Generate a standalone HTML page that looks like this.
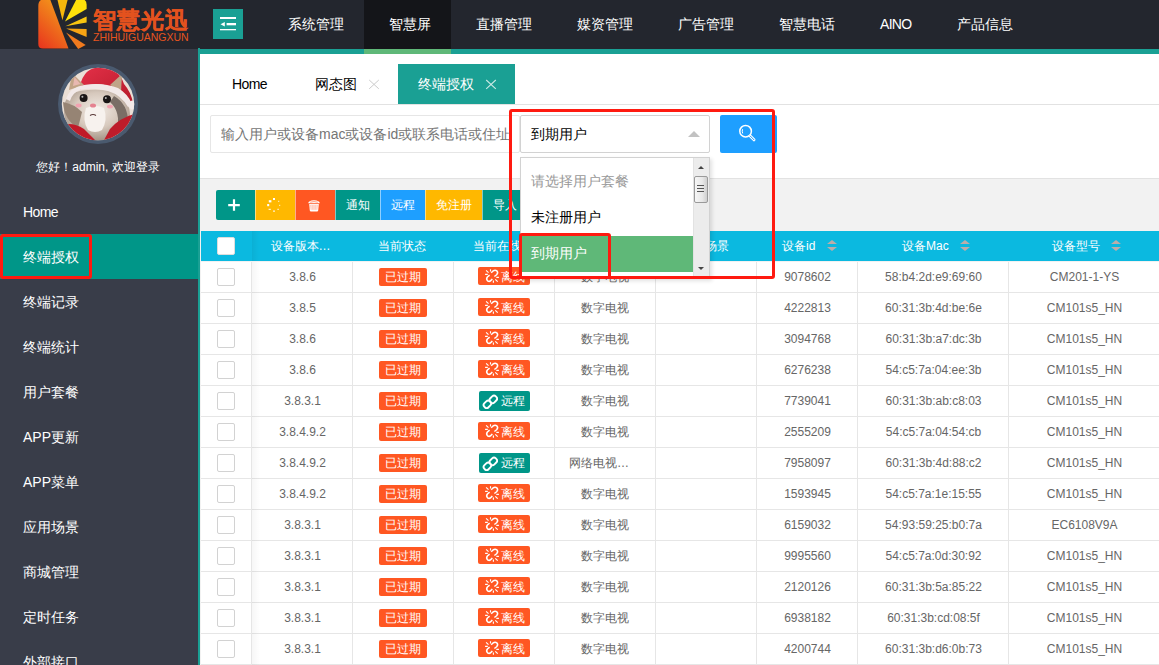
<!DOCTYPE html>
<html><head><meta charset="utf-8">
<style>
*{margin:0;padding:0;box-sizing:border-box}
html,body{width:1159px;height:665px;overflow:hidden;background:#fff}
body{position:relative;font-family:"Liberation Sans",sans-serif;font-size:14px;color:#333}
.a{position:absolute}
.hdr{left:0;top:0;width:1159px;height:49px;background:#23262E}
.nav{top:0;height:48px;line-height:48px;color:#fff;font-size:14px;white-space:nowrap}
.side{left:0;top:49px;width:198px;height:616px;background:#393D49}
.menu{left:23px;color:#fff;font-size:14px;line-height:20px;white-space:nowrap}
.tab{top:64px;height:40px;line-height:40px;font-size:14px;color:#000;white-space:nowrap}
.x{color:#aaa;font-size:16px}
.btn{top:190px;height:30px;line-height:30px;color:#fff;font-size:12px;text-align:center}
.th{top:231px;height:30px;line-height:30px;color:#fff;font-size:12px;text-align:center;white-space:nowrap}
.row{left:201px;width:958px;height:31px;border-bottom:1px solid #e6e6e6;background:#fff}
.cell{position:absolute;top:0;height:30px;line-height:30px;font-size:12px;color:#666;text-align:center;white-space:nowrap}
.vl{position:absolute;top:262px;width:1px;height:403px;background:#e6e6e6}
.cb{position:absolute;width:18px;height:18px;border:1px solid #d2d2d2;border-radius:2px;background:#fff}
.bd{position:absolute;height:18px;line-height:18px;color:#fff;font-size:12px;border-radius:2px;text-align:center}.bd .ic{position:absolute}.bt{position:absolute;top:0;line-height:18px}
.red{position:absolute;border:3px solid #FF1A10;border-radius:3px}
.exp{background:#FF5722}.off{background:#FF5722}.on{background:#009688}
.srt{display:inline-block;width:10px;height:12px;vertical-align:middle;position:relative;margin-left:6px;top:-1px}.srt:before{content:"";position:absolute;left:0;top:1px;border-left:4.6px solid transparent;border-right:4.6px solid transparent;border-bottom:4.5px solid #BDB0AB}.srt:after{content:"";position:absolute;left:0;top:7px;border-left:4.6px solid transparent;border-right:4.6px solid transparent;border-top:4.5px solid #BDB0AB}
.srt2{width:10px;height:12px}.srt2:before{content:"";position:absolute;left:0;top:0;border-left:5.1px solid transparent;border-right:5.1px solid transparent;border-bottom:4.8px solid #BBADA9}.srt2:after{content:"";position:absolute;left:0;top:6.8px;border-left:5.1px solid transparent;border-right:5.1px solid transparent;border-top:4.8px solid #BBADA9}
</style></head><body>

<!-- header -->
<div class="a hdr"></div>
<div class="a" style="left:364px;top:0;width:87px;height:49px;background:#141519"></div>
<div class="a" style="left:213px;top:9px;width:30px;height:30px;background:#1AA094"></div>
<div class="a nav" style="left:288px">系统管理</div>
<div class="a nav" style="left:389px">智慧屏</div>
<div class="a nav" style="left:476px">直播管理</div>
<div class="a nav" style="left:577px">媒资管理</div>
<div class="a nav" style="left:678px">广告管理</div>
<div class="a nav" style="left:779px">智慧电话</div>
<div class="a nav" style="left:880px;letter-spacing:-0.7px">AINO</div>
<div class="a nav" style="left:957px">产品信息</div>

<!-- teal frame -->
<div class="a" style="left:198px;top:49px;width:961px;height:5px;background:#1AA094"></div>
<div class="a" style="left:364px;top:49px;width:87px;height:5px;background:#5FB878"></div>
<div class="a" style="left:198px;top:48px;width:2px;height:617px;background:#1AA094"></div>

<!-- sidebar -->
<div class="a side"></div>
<div class="a" style="left:23px;top:159px;width:150px;text-align:center;color:#fff;font-size:12px">您好！admin, 欢迎登录</div>
<div class="a" style="left:0;top:234px;width:198px;height:45px;background:#009688"></div>
<div class="a menu" style="top:202px;letter-spacing:-0.6px">Home</div>
<div class="a menu" style="top:247px">终端授权</div>
<div class="a menu" style="top:292px">终端记录</div>
<div class="a menu" style="top:337px">终端统计</div>
<div class="a menu" style="top:382px">用户套餐</div>
<div class="a menu" style="top:427px">APP更新</div>
<div class="a menu" style="top:472px">APP菜单</div>
<div class="a menu" style="top:517px">应用场景</div>
<div class="a menu" style="top:562px">商城管理</div>
<div class="a menu" style="top:607px">定时任务</div>
<div class="a menu" style="top:652px">外部接口</div>

<!-- content -->
<div class="a" style="left:200px;top:104px;width:959px;height:1px;background:#e2e2e2"></div>
<div class="a tab" style="left:232px;letter-spacing:-0.6px">Home</div>
<div class="a tab" style="left:315px">网态图</div>
<div class="a" style="left:398px;top:64px;width:117px;height:40px;background:#1AA094"></div>
<div class="a tab" style="left:418px;color:#fff">终端授权</div>

<div class="a" style="left:210px;top:115px;width:310px;height:38px;border:1px solid #e6e6e6;border-radius:2px"></div>
<div class="a" style="left:221px;top:115px;height:38px;line-height:38px;font-size:14px;color:#757575;white-space:nowrap;width:288px;overflow:hidden">输入用户或设备mac或设备id或联系电话或住址</div>

<div class="a" style="left:200px;top:178px;width:959px;height:487px;background:#F2F2F2;border-top:1px solid #e2e2e2"></div>

<!-- buttons -->
<div class="a btn" style="left:216px;width:39px;background:#009688;border-radius:2px 0 0 2px"></div>
<div class="a btn" style="left:255px;width:40px;background:#FFB800;border-left:1px solid #FFDC80"></div>
<div class="a btn" style="left:295px;width:40px;background:#FF5722;border-left:1px solid #FFAB91"></div>
<div class="a btn" style="left:335px;width:45px;background:#009688;border-left:1px solid #80CBC4">通知</div>
<div class="a btn" style="left:380px;width:45px;background:#1E9FFF;border-left:1px solid #8FCFFF">远程</div>
<div class="a btn" style="left:425px;width:57px;background:#FFB800;border-left:1px solid #FFDC80">免注册</div>
<div class="a btn" style="left:482px;width:45px;background:#009688;border-left:1px solid #80CBC4">导入</div>

<!-- table header -->
<div class="a" style="left:201px;top:231px;width:958px;height:30px;background:#0BB9E0"></div>
<div class="cb" style="left:217px;top:237px;border-color:#ddd"></div>



<!-- logo -->
<svg class="a" style="left:30px;top:0" width="65" height="50" viewBox="30 0 65 50">
<defs>
<linearGradient id="lg1" x1="0" y1="1" x2="0.6" y2="0"><stop offset="0" stop-color="#E8321E"/><stop offset="1" stop-color="#F39A1A"/></linearGradient>
<linearGradient id="lg2" x1="0" y1="0" x2="0" y2="1"><stop offset="0" stop-color="#FFE40A"/><stop offset="1" stop-color="#F27A1E"/></linearGradient>
</defs>
<path d="M45,-1 L50,-1 L68.5,48.5 L42.8,48.5 Q38.3,48.5 38.3,44 L38.3,6 Q38.3,-1 45,-1 Z" fill="url(#lg1)"/>
<polygon points="62.4,20.3 57.5,0 67.6,0" fill="#F6B80C"/>
<path d="M65,21.4 L76.6,-1 L82.5,-1 Q86.6,0 86.6,4.5 L86.6,9 Z" fill="#FFE10A"/>
<polygon points="65.4,26.3 86.6,16.5 86.6,22.6" fill="#F9C510"/>
<polygon points="66.1,28.6 86.6,29 86.6,36.9" fill="#F6A414"/>
<polygon points="66.1,32.4 85.7,45.1 78.2,48.9" fill="#F07A1E"/>
</svg>
<div class="a" style="left:92.5px;top:6px;font-size:23px;line-height:28px;font-weight:bold;color:#E4521E;letter-spacing:1px;white-space:nowrap;-webkit-text-stroke:0.25px #E4521E">智慧光迅</div>
<div class="a" style="left:93px;top:31px;font-size:10.5px;line-height:12px;color:#E8541E;white-space:nowrap;letter-spacing:0px">ZHIHUIGUANGXUN</div>

<!-- toggle icon -->
<svg class="a" style="left:213px;top:9px" width="30" height="30" viewBox="0 0 30 30">
<rect x="7" y="8" width="16" height="2" fill="#fff"/>
<polygon points="7.5,15.2 11.8,13 11.8,17.4" fill="#fff"/>
<rect x="13.6" y="14" width="9.4" height="2.3" fill="#fff"/>
<rect x="7" y="20" width="16" height="1.3" fill="#fff"/>
</svg>

<!-- avatar -->
<svg class="a" style="left:58px;top:64px" width="80" height="80" viewBox="58 64 80 80">
<defs><clipPath id="av"><circle cx="98" cy="104" r="36.2"/></clipPath>
<radialGradient id="fg" cx="0.5" cy="0.4" r="0.62"><stop offset="0" stop-color="#F3ECE6"/><stop offset="0.55" stop-color="#D6C8BC"/><stop offset="1" stop-color="#9E8E80"/></radialGradient>
<linearGradient id="hg" x1="0" y1="0" x2="1" y2="1"><stop offset="0" stop-color="#E43048"/><stop offset="1" stop-color="#B51A2A"/></linearGradient>
</defs>
<circle cx="98" cy="104" r="40" fill="#4A5A6F"/>
<g clip-path="url(#av)">
<rect x="58" y="64" width="80" height="80" fill="#EADFD6"/>
<path d="M80,86 Q84,67 101,67 Q119,68 124,84 Q131,92 133,103 L120,96 Q110,84 98,84 Q86,84 80,90 Z" fill="url(#hg)"/>
<path d="M69,90 L72,73 L84,85 Z" fill="#C2A486"/>
<path d="M73,86 L74.5,77 L80.5,84 Z" fill="#E8B8B0"/>
<path d="M121,92 L122,74 L110,85 Z" fill="#BFA488"/>
<path d="M64,112 Q63,94 80,91 Q98,88 116,92 Q130,100 130,116 Q129,132 112,139 Q96,143 82,139 Q65,131 64,112 Z" fill="url(#fg)"/>
<path d="M63,102 Q64,120 78,128 L82,112 Q74,104 63,102 Z" fill="#968474"/>
<path d="M114,96 Q128,104 128,122 L117,130 Q121,112 110,102 Z" fill="#7A6E66"/>
<path d="M86,108 Q95,104 104,108 Q108,120 102,130 Q95,134 88,130 Q82,120 86,108 Z" fill="#F7F2EE"/>
<path d="M66,99 Q70,87 84,85 Q102,82 118,88 Q128,94 132,104 L128,107 Q121,95 108,91 Q92,87 80,90 Q72,93 70,101 Z" fill="#F2E9E8"/>
<circle cx="133" cy="105" r="4.5" fill="#F2E9E8"/>
<circle cx="83.6" cy="98" r="4" fill="#191515"/>
<circle cx="107" cy="99.3" r="4" fill="#191515"/>
<circle cx="82.4" cy="96.8" r="1" fill="#fff" opacity=".7"/>
<circle cx="105.8" cy="98.1" r="1" fill="#fff" opacity=".7"/>
<ellipse cx="93" cy="105.5" rx="3" ry="2.1" fill="#E58290"/>
<ellipse cx="78.6" cy="105.5" rx="3" ry="1.9" fill="#F2A2B0"/>
<ellipse cx="110" cy="106.6" rx="3" ry="1.9" fill="#F2A2B0"/>
<path d="M90,115.5 Q93,113.6 96,115.5" stroke="#5A3A3A" stroke-width="1.1" fill="none"/>
<path d="M58,127 Q70,120 84,129 L97,142 L58,142 Z" fill="#C01A28"/>
<path d="M103,142 L110,129 Q120,117 138,113 L138,142 Z" fill="#BE1C2A"/>
</g>
</svg>

<!-- tab close marks -->
<svg class="a" style="left:368px;top:79px" width="12" height="11" viewBox="0 0 12 11"><path d="M1.2,1 L10.8,9.8 M10.8,1 L1.2,9.8" stroke="#cccccc" stroke-width="1"/></svg>
<svg class="a" style="left:485px;top:79px" width="12" height="11" viewBox="0 0 12 11"><path d="M1.2,1 L10.8,9.8 M10.8,1 L1.2,9.8" stroke="#c9e8e4" stroke-width="1.1"/></svg>

<!-- button icons -->
<svg class="a" style="left:226px;top:197px" width="16" height="16" viewBox="0 0 16 16"><path d="M8,2.2 V13.8 M2.2,8.2 H13.8" stroke="#fff" stroke-width="2.2"/></svg>
<svg class="a" style="left:266px;top:197px" width="16" height="16" viewBox="0 0 16 16" fill="#fff">
<rect x="7" y="1" width="2" height="2"/><rect x="2.8" y="3.2" width="2.6" height="2.2"/><rect x="1.2" y="7" width="2" height="2.2"/>
<rect x="2.6" y="11.8" width="2.2" height="1"/><rect x="7" y="13.6" width="2" height="1"/><rect x="11.4" y="11.8" width="1.4" height="1"/>
<rect x="13.2" y="7.8" width="1" height="1"/><rect x="12.2" y="3.8" width="1" height="1"/>
</svg>
<svg class="a" style="left:306px;top:197px" width="16" height="16" viewBox="0 0 16 16">
<path d="M2.2,6.2 Q2.4,3.6 8,3.2 Q13.6,3.6 13.8,6.2 Z" fill="#fff"/>
<path d="M4.2,5.2 Q8,4 11.8,5.2" stroke="#FF5722" stroke-width="0.6" fill="none"/>
<path d="M3.2,7 L3.8,13.4 Q3.9,14.4 5,14.4 H11 Q12.1,14.4 12.2,13.4 L12.8,7 Z" fill="#fff"/>
<path d="M4.3,7.8 L4.7,12.8 H11.3 L11.7,7.8 Z" fill="#FFB9A4"/>
<path d="M5.9,7.8 V12.8 M8,7.8 V12.8 M10.1,7.8 V12.8" stroke="#fff" stroke-width="0.8"/>
</svg>



<!-- table header texts -->
<div class="a th" style="left:250px;width:101px">设备版本…</div>
<div class="a th" style="left:351.5px;width:101px">当前状态</div>
<div class="a th" style="left:452.5px;width:101px">当前在线…</div>
<div class="a th" style="left:553.5px;width:101px">终端类型</div>
<div class="a th" style="left:654.5px;width:101px">应用场景</div>
<div class="a th" style="left:782px">设备id</div>
<i class="a srt2" style="left:827px;top:240px"></i>
<div class="a th" style="left:902px">设备Mac</div>
<i class="a srt2" style="left:959.5px;top:240px"></i>
<div class="a th" style="left:1052px">设备型号</div>
<i class="a srt2" style="left:1111px;top:240px"></i>

<!-- rows -->
<div class="a row" style="top:262px">
<div class="cb" style="left:16px;top:6px"></div>
<div class="cell" style="left:51px;width:101px">3.8.6</div>
<div class="bd exp" style="left:178px;top:6px;width:48px">已过期</div>
<div class="bd off" style="left:277px;top:5px;width:52px"><svg class="ic" style="left:4px;top:0" width="20" height="18" viewBox="0 0 20 18" fill="none" stroke="#fff" stroke-width="1.15"><path d="M4.1,3.4 L6.5,5.7 M8.5,2.2 V4.6 M3.1,7.4 H5.8 M14.3,10.4 H16.9 M11.4,13.4 V15.8 M13.3,12.3 L15.7,14.7"/><path d="M7.6,8.1 L5.4,10 Q3.8,12.2 5.6,13.8 Q7.6,15.3 9.4,13 L10.3,11.9" stroke-width="1.5"/><path d="M9.2,5.7 L10.8,4.2 Q13,2.4 14.8,3.8 Q16.6,5.6 14.6,7.8 L12.4,9.5" stroke-width="1.5"/></svg><span class="bt" style="left:22.5px;top:1px">离线</span></div>
<div class="cell" style="left:353px;width:101px">数字电视</div>
<div class="cell" style="left:556px;width:101px">9078602</div>
<div class="cell" style="left:657px;width:151px">58:b4:2d:e9:69:60</div>
<div class="cell" style="left:808px;width:151px">CM201-1-YS</div>
</div>
<div class="a row" style="top:293px">
<div class="cb" style="left:16px;top:6px"></div>
<div class="cell" style="left:51px;width:101px">3.8.5</div>
<div class="bd exp" style="left:178px;top:6px;width:48px">已过期</div>
<div class="bd off" style="left:277px;top:5px;width:52px"><svg class="ic" style="left:4px;top:0" width="20" height="18" viewBox="0 0 20 18" fill="none" stroke="#fff" stroke-width="1.15"><path d="M4.1,3.4 L6.5,5.7 M8.5,2.2 V4.6 M3.1,7.4 H5.8 M14.3,10.4 H16.9 M11.4,13.4 V15.8 M13.3,12.3 L15.7,14.7"/><path d="M7.6,8.1 L5.4,10 Q3.8,12.2 5.6,13.8 Q7.6,15.3 9.4,13 L10.3,11.9" stroke-width="1.5"/><path d="M9.2,5.7 L10.8,4.2 Q13,2.4 14.8,3.8 Q16.6,5.6 14.6,7.8 L12.4,9.5" stroke-width="1.5"/></svg><span class="bt" style="left:22.5px;top:1px">离线</span></div>
<div class="cell" style="left:353px;width:101px">数字电视</div>
<div class="cell" style="left:556px;width:101px">4222813</div>
<div class="cell" style="left:657px;width:151px">60:31:3b:4d:be:6e</div>
<div class="cell" style="left:808px;width:151px">CM101s5_HN</div>
</div>
<div class="a row" style="top:324px">
<div class="cb" style="left:16px;top:6px"></div>
<div class="cell" style="left:51px;width:101px">3.8.6</div>
<div class="bd exp" style="left:178px;top:6px;width:48px">已过期</div>
<div class="bd off" style="left:277px;top:5px;width:52px"><svg class="ic" style="left:4px;top:0" width="20" height="18" viewBox="0 0 20 18" fill="none" stroke="#fff" stroke-width="1.15"><path d="M4.1,3.4 L6.5,5.7 M8.5,2.2 V4.6 M3.1,7.4 H5.8 M14.3,10.4 H16.9 M11.4,13.4 V15.8 M13.3,12.3 L15.7,14.7"/><path d="M7.6,8.1 L5.4,10 Q3.8,12.2 5.6,13.8 Q7.6,15.3 9.4,13 L10.3,11.9" stroke-width="1.5"/><path d="M9.2,5.7 L10.8,4.2 Q13,2.4 14.8,3.8 Q16.6,5.6 14.6,7.8 L12.4,9.5" stroke-width="1.5"/></svg><span class="bt" style="left:22.5px;top:1px">离线</span></div>
<div class="cell" style="left:353px;width:101px">数字电视</div>
<div class="cell" style="left:556px;width:101px">3094768</div>
<div class="cell" style="left:657px;width:151px">60:31:3b:a7:dc:3b</div>
<div class="cell" style="left:808px;width:151px">CM101s5_HN</div>
</div>
<div class="a row" style="top:355px">
<div class="cb" style="left:16px;top:6px"></div>
<div class="cell" style="left:51px;width:101px">3.8.6</div>
<div class="bd exp" style="left:178px;top:6px;width:48px">已过期</div>
<div class="bd off" style="left:277px;top:5px;width:52px"><svg class="ic" style="left:4px;top:0" width="20" height="18" viewBox="0 0 20 18" fill="none" stroke="#fff" stroke-width="1.15"><path d="M4.1,3.4 L6.5,5.7 M8.5,2.2 V4.6 M3.1,7.4 H5.8 M14.3,10.4 H16.9 M11.4,13.4 V15.8 M13.3,12.3 L15.7,14.7"/><path d="M7.6,8.1 L5.4,10 Q3.8,12.2 5.6,13.8 Q7.6,15.3 9.4,13 L10.3,11.9" stroke-width="1.5"/><path d="M9.2,5.7 L10.8,4.2 Q13,2.4 14.8,3.8 Q16.6,5.6 14.6,7.8 L12.4,9.5" stroke-width="1.5"/></svg><span class="bt" style="left:22.5px;top:1px">离线</span></div>
<div class="cell" style="left:353px;width:101px">数字电视</div>
<div class="cell" style="left:556px;width:101px">6276238</div>
<div class="cell" style="left:657px;width:151px">54:c5:7a:04:ee:3b</div>
<div class="cell" style="left:808px;width:151px">CM101s5_HN</div>
</div>
<div class="a row" style="top:386px">
<div class="cb" style="left:16px;top:6px"></div>
<div class="cell" style="left:51px;width:101px">3.8.3.1</div>
<div class="bd exp" style="left:178px;top:6px;width:48px">已过期</div>
<div class="bd on" style="left:278px;top:5px;width:51px;height:20px"><svg class="ic" style="left:3px;top:2px" width="16" height="16" viewBox="0 0 16 16" fill="none" stroke="#fff" stroke-width="1.9"><rect x="-3.9" y="-2.9" width="7.8" height="5.8" rx="2.6" transform="translate(5.4,11.3) rotate(-45)"/><rect x="-3.9" y="-2.9" width="7.8" height="5.8" rx="2.6" transform="translate(11.3,6.4) rotate(-45)"/></svg><span class="bt" style="left:21.5px;top:1px">远程</span></div>
<div class="cell" style="left:353px;width:101px">数字电视</div>
<div class="cell" style="left:556px;width:101px">7739041</div>
<div class="cell" style="left:657px;width:151px">60:31:3b:ab:c8:03</div>
<div class="cell" style="left:808px;width:151px">CM101s5_HN</div>
</div>
<div class="a row" style="top:417px">
<div class="cb" style="left:16px;top:6px"></div>
<div class="cell" style="left:51px;width:101px">3.8.4.9.2</div>
<div class="bd exp" style="left:178px;top:6px;width:48px">已过期</div>
<div class="bd off" style="left:277px;top:5px;width:52px"><svg class="ic" style="left:4px;top:0" width="20" height="18" viewBox="0 0 20 18" fill="none" stroke="#fff" stroke-width="1.15"><path d="M4.1,3.4 L6.5,5.7 M8.5,2.2 V4.6 M3.1,7.4 H5.8 M14.3,10.4 H16.9 M11.4,13.4 V15.8 M13.3,12.3 L15.7,14.7"/><path d="M7.6,8.1 L5.4,10 Q3.8,12.2 5.6,13.8 Q7.6,15.3 9.4,13 L10.3,11.9" stroke-width="1.5"/><path d="M9.2,5.7 L10.8,4.2 Q13,2.4 14.8,3.8 Q16.6,5.6 14.6,7.8 L12.4,9.5" stroke-width="1.5"/></svg><span class="bt" style="left:22.5px;top:1px">离线</span></div>
<div class="cell" style="left:353px;width:101px">数字电视</div>
<div class="cell" style="left:556px;width:101px">2555209</div>
<div class="cell" style="left:657px;width:151px">54:c5:7a:04:54:cb</div>
<div class="cell" style="left:808px;width:151px">CM101s5_HN</div>
</div>
<div class="a row" style="top:448px">
<div class="cb" style="left:16px;top:6px"></div>
<div class="cell" style="left:51px;width:101px">3.8.4.9.2</div>
<div class="bd exp" style="left:178px;top:6px;width:48px">已过期</div>
<div class="bd on" style="left:278px;top:5px;width:51px;height:20px"><svg class="ic" style="left:3px;top:2px" width="16" height="16" viewBox="0 0 16 16" fill="none" stroke="#fff" stroke-width="1.9"><rect x="-3.9" y="-2.9" width="7.8" height="5.8" rx="2.6" transform="translate(5.4,11.3) rotate(-45)"/><rect x="-3.9" y="-2.9" width="7.8" height="5.8" rx="2.6" transform="translate(11.3,6.4) rotate(-45)"/></svg><span class="bt" style="left:21.5px;top:1px">远程</span></div>
<div class="cell" style="left:368px;text-align:left">网络电视…</div>
<div class="cell" style="left:556px;width:101px">7958097</div>
<div class="cell" style="left:657px;width:151px">60:31:3b:4d:88:c2</div>
<div class="cell" style="left:808px;width:151px">CM101s5_HN</div>
</div>
<div class="a row" style="top:479px">
<div class="cb" style="left:16px;top:6px"></div>
<div class="cell" style="left:51px;width:101px">3.8.4.9.2</div>
<div class="bd exp" style="left:178px;top:6px;width:48px">已过期</div>
<div class="bd off" style="left:277px;top:5px;width:52px"><svg class="ic" style="left:4px;top:0" width="20" height="18" viewBox="0 0 20 18" fill="none" stroke="#fff" stroke-width="1.15"><path d="M4.1,3.4 L6.5,5.7 M8.5,2.2 V4.6 M3.1,7.4 H5.8 M14.3,10.4 H16.9 M11.4,13.4 V15.8 M13.3,12.3 L15.7,14.7"/><path d="M7.6,8.1 L5.4,10 Q3.8,12.2 5.6,13.8 Q7.6,15.3 9.4,13 L10.3,11.9" stroke-width="1.5"/><path d="M9.2,5.7 L10.8,4.2 Q13,2.4 14.8,3.8 Q16.6,5.6 14.6,7.8 L12.4,9.5" stroke-width="1.5"/></svg><span class="bt" style="left:22.5px;top:1px">离线</span></div>
<div class="cell" style="left:353px;width:101px">数字电视</div>
<div class="cell" style="left:556px;width:101px">1593945</div>
<div class="cell" style="left:657px;width:151px">54:c5:7a:1e:15:55</div>
<div class="cell" style="left:808px;width:151px">CM101s5_HN</div>
</div>
<div class="a row" style="top:510px">
<div class="cb" style="left:16px;top:6px"></div>
<div class="cell" style="left:51px;width:101px">3.8.3.1</div>
<div class="bd exp" style="left:178px;top:6px;width:48px">已过期</div>
<div class="bd off" style="left:277px;top:5px;width:52px"><svg class="ic" style="left:4px;top:0" width="20" height="18" viewBox="0 0 20 18" fill="none" stroke="#fff" stroke-width="1.15"><path d="M4.1,3.4 L6.5,5.7 M8.5,2.2 V4.6 M3.1,7.4 H5.8 M14.3,10.4 H16.9 M11.4,13.4 V15.8 M13.3,12.3 L15.7,14.7"/><path d="M7.6,8.1 L5.4,10 Q3.8,12.2 5.6,13.8 Q7.6,15.3 9.4,13 L10.3,11.9" stroke-width="1.5"/><path d="M9.2,5.7 L10.8,4.2 Q13,2.4 14.8,3.8 Q16.6,5.6 14.6,7.8 L12.4,9.5" stroke-width="1.5"/></svg><span class="bt" style="left:22.5px;top:1px">离线</span></div>
<div class="cell" style="left:353px;width:101px">数字电视</div>
<div class="cell" style="left:556px;width:101px">6159032</div>
<div class="cell" style="left:657px;width:151px">54:93:59:25:b0:7a</div>
<div class="cell" style="left:808px;width:151px">EC6108V9A</div>
</div>
<div class="a row" style="top:541px">
<div class="cb" style="left:16px;top:6px"></div>
<div class="cell" style="left:51px;width:101px">3.8.3.1</div>
<div class="bd exp" style="left:178px;top:6px;width:48px">已过期</div>
<div class="bd off" style="left:277px;top:5px;width:52px"><svg class="ic" style="left:4px;top:0" width="20" height="18" viewBox="0 0 20 18" fill="none" stroke="#fff" stroke-width="1.15"><path d="M4.1,3.4 L6.5,5.7 M8.5,2.2 V4.6 M3.1,7.4 H5.8 M14.3,10.4 H16.9 M11.4,13.4 V15.8 M13.3,12.3 L15.7,14.7"/><path d="M7.6,8.1 L5.4,10 Q3.8,12.2 5.6,13.8 Q7.6,15.3 9.4,13 L10.3,11.9" stroke-width="1.5"/><path d="M9.2,5.7 L10.8,4.2 Q13,2.4 14.8,3.8 Q16.6,5.6 14.6,7.8 L12.4,9.5" stroke-width="1.5"/></svg><span class="bt" style="left:22.5px;top:1px">离线</span></div>
<div class="cell" style="left:353px;width:101px">数字电视</div>
<div class="cell" style="left:556px;width:101px">9995560</div>
<div class="cell" style="left:657px;width:151px">54:c5:7a:0d:30:92</div>
<div class="cell" style="left:808px;width:151px">CM101s5_HN</div>
</div>
<div class="a row" style="top:572px">
<div class="cb" style="left:16px;top:6px"></div>
<div class="cell" style="left:51px;width:101px">3.8.3.1</div>
<div class="bd exp" style="left:178px;top:6px;width:48px">已过期</div>
<div class="bd off" style="left:277px;top:5px;width:52px"><svg class="ic" style="left:4px;top:0" width="20" height="18" viewBox="0 0 20 18" fill="none" stroke="#fff" stroke-width="1.15"><path d="M4.1,3.4 L6.5,5.7 M8.5,2.2 V4.6 M3.1,7.4 H5.8 M14.3,10.4 H16.9 M11.4,13.4 V15.8 M13.3,12.3 L15.7,14.7"/><path d="M7.6,8.1 L5.4,10 Q3.8,12.2 5.6,13.8 Q7.6,15.3 9.4,13 L10.3,11.9" stroke-width="1.5"/><path d="M9.2,5.7 L10.8,4.2 Q13,2.4 14.8,3.8 Q16.6,5.6 14.6,7.8 L12.4,9.5" stroke-width="1.5"/></svg><span class="bt" style="left:22.5px;top:1px">离线</span></div>
<div class="cell" style="left:353px;width:101px">数字电视</div>
<div class="cell" style="left:556px;width:101px">2120126</div>
<div class="cell" style="left:657px;width:151px">60:31:3b:5a:85:22</div>
<div class="cell" style="left:808px;width:151px">CM101s5_HN</div>
</div>
<div class="a row" style="top:603px">
<div class="cb" style="left:16px;top:6px"></div>
<div class="cell" style="left:51px;width:101px">3.8.3.1</div>
<div class="bd exp" style="left:178px;top:6px;width:48px">已过期</div>
<div class="bd off" style="left:277px;top:5px;width:52px"><svg class="ic" style="left:4px;top:0" width="20" height="18" viewBox="0 0 20 18" fill="none" stroke="#fff" stroke-width="1.15"><path d="M4.1,3.4 L6.5,5.7 M8.5,2.2 V4.6 M3.1,7.4 H5.8 M14.3,10.4 H16.9 M11.4,13.4 V15.8 M13.3,12.3 L15.7,14.7"/><path d="M7.6,8.1 L5.4,10 Q3.8,12.2 5.6,13.8 Q7.6,15.3 9.4,13 L10.3,11.9" stroke-width="1.5"/><path d="M9.2,5.7 L10.8,4.2 Q13,2.4 14.8,3.8 Q16.6,5.6 14.6,7.8 L12.4,9.5" stroke-width="1.5"/></svg><span class="bt" style="left:22.5px;top:1px">离线</span></div>
<div class="cell" style="left:353px;width:101px">数字电视</div>
<div class="cell" style="left:556px;width:101px">6938182</div>
<div class="cell" style="left:657px;width:151px">60:31:3b:cd:08:5f</div>
<div class="cell" style="left:808px;width:151px">CM101s5_HN</div>
</div>
<div class="a row" style="top:634px">
<div class="cb" style="left:16px;top:6px"></div>
<div class="cell" style="left:51px;width:101px">3.8.3.1</div>
<div class="bd exp" style="left:178px;top:6px;width:48px">已过期</div>
<div class="bd off" style="left:277px;top:5px;width:52px"><svg class="ic" style="left:4px;top:0" width="20" height="18" viewBox="0 0 20 18" fill="none" stroke="#fff" stroke-width="1.15"><path d="M4.1,3.4 L6.5,5.7 M8.5,2.2 V4.6 M3.1,7.4 H5.8 M14.3,10.4 H16.9 M11.4,13.4 V15.8 M13.3,12.3 L15.7,14.7"/><path d="M7.6,8.1 L5.4,10 Q3.8,12.2 5.6,13.8 Q7.6,15.3 9.4,13 L10.3,11.9" stroke-width="1.5"/><path d="M9.2,5.7 L10.8,4.2 Q13,2.4 14.8,3.8 Q16.6,5.6 14.6,7.8 L12.4,9.5" stroke-width="1.5"/></svg><span class="bt" style="left:22.5px;top:1px">离线</span></div>
<div class="cell" style="left:353px;width:101px">数字电视</div>
<div class="cell" style="left:556px;width:101px">4200744</div>
<div class="cell" style="left:657px;width:151px">60:31:3b:d6:0b:73</div>
<div class="cell" style="left:808px;width:151px">CM101s5_HN</div>
</div>

<div class="vl" style="left:251px"></div>
<div class="a" style="left:252px;top:231px;width:7px;height:30px;background:linear-gradient(90deg,rgba(0,0,0,.05),rgba(0,0,0,0))"></div>
<div class="a" style="left:252px;top:262px;width:8px;height:403px;background:linear-gradient(90deg,rgba(0,0,0,.035),rgba(0,0,0,0))"></div>
<div class="vl" style="left:352px"></div>
<div class="vl" style="left:453px"></div>
<div class="vl" style="left:554px"></div>
<div class="vl" style="left:655px"></div>
<div class="vl" style="left:756px"></div>
<div class="vl" style="left:857px"></div>
<div class="vl" style="left:1008px"></div>

<!-- select -->
<div class="a" style="left:520px;top:115px;width:190px;height:38px;border:1px solid #d2d2d2;border-radius:2px;background:#fff"></div>
<div class="a" style="left:531px;top:115px;line-height:38px;font-size:14px;color:#000;white-space:nowrap">到期用户</div>
<div class="a" style="left:688px;top:131px;width:0;height:0;border-left:6px solid transparent;border-right:6px solid transparent;border-bottom:6px solid #c2c2c2"></div>
<div class="a" style="left:720px;top:115px;width:57px;height:38px;background:#1E9FFF;border-radius:2px"></div>
<!-- search icon -->
<svg class="a" style="left:735px;top:122px" width="24" height="22" viewBox="0 0 24 22">
<circle cx="10.6" cy="9.2" r="5.8" stroke="#fff" stroke-width="1.5" fill="none"/>
<path d="M7.6,7.2 Q6.8,9.2 7.7,11.4" stroke="#fff" stroke-width="1" fill="none"/>
<path d="M15.2,14 L19,17.8" stroke="#fff" stroke-width="3" stroke-linecap="round"/>
<path d="M15.2,14 L19,17.8" stroke="#1E9FFF" stroke-width="1" stroke-linecap="round"/>
</svg>

<!-- dropdown -->
<div class="a" style="left:520px;top:157px;width:190px;height:122px;background:#fff;border:1px solid #d2d2d2;box-shadow:2px 2px 4px rgba(0,0,0,.12);overflow:hidden">
  <div class="a" style="left:10px;top:8px;line-height:30px;font-size:14px;color:#999;white-space:nowrap">请选择用户套餐</div>
  <div class="a" style="left:10px;top:44px;line-height:30px;font-size:14px;color:#000;white-space:nowrap">未注册用户</div>
  <div class="a" style="left:0;top:78px;width:172px;height:36px;background:#5FB878"></div>
  <div class="a" style="left:10px;top:80px;line-height:30px;font-size:14px;color:#fff;white-space:nowrap">到期用户</div>
  <div class="a" style="left:172px;top:0;width:17px;height:122px;background:#ececec;border-left:1px solid #e2e2e2"></div>
  <div class="a" style="left:177px;top:8px;width:0;height:0;border-left:3.5px solid transparent;border-right:3.5px solid transparent;border-bottom:3.5px solid #444"></div>
  <div class="a" style="left:173px;top:18px;width:14px;height:27px;background:linear-gradient(90deg,#f6f6f6,#e8e8e8 60%,#cfcfcf);border:1px solid #9a9a9a;border-radius:2px"></div><div class="a" style="left:176px;top:27px;width:7px;height:1px;background:#555"></div><div class="a" style="left:176px;top:30px;width:7px;height:1px;background:#555"></div><div class="a" style="left:176px;top:33px;width:7px;height:1px;background:#555"></div>
  <div class="a" style="left:177px;top:109px;width:0;height:0;border-left:3.5px solid transparent;border-right:3.5px solid transparent;border-top:3.5px solid #444"></div>
</div>

<!-- red annotation boxes -->
<div class="red" style="left:0;top:234px;width:92px;height:45px"></div>
<div class="red" style="left:509px;top:109px;width:266px;height:170px"></div>
<div class="red" style="left:519px;top:233px;width:92px;height:46px"></div>

</body></html>
